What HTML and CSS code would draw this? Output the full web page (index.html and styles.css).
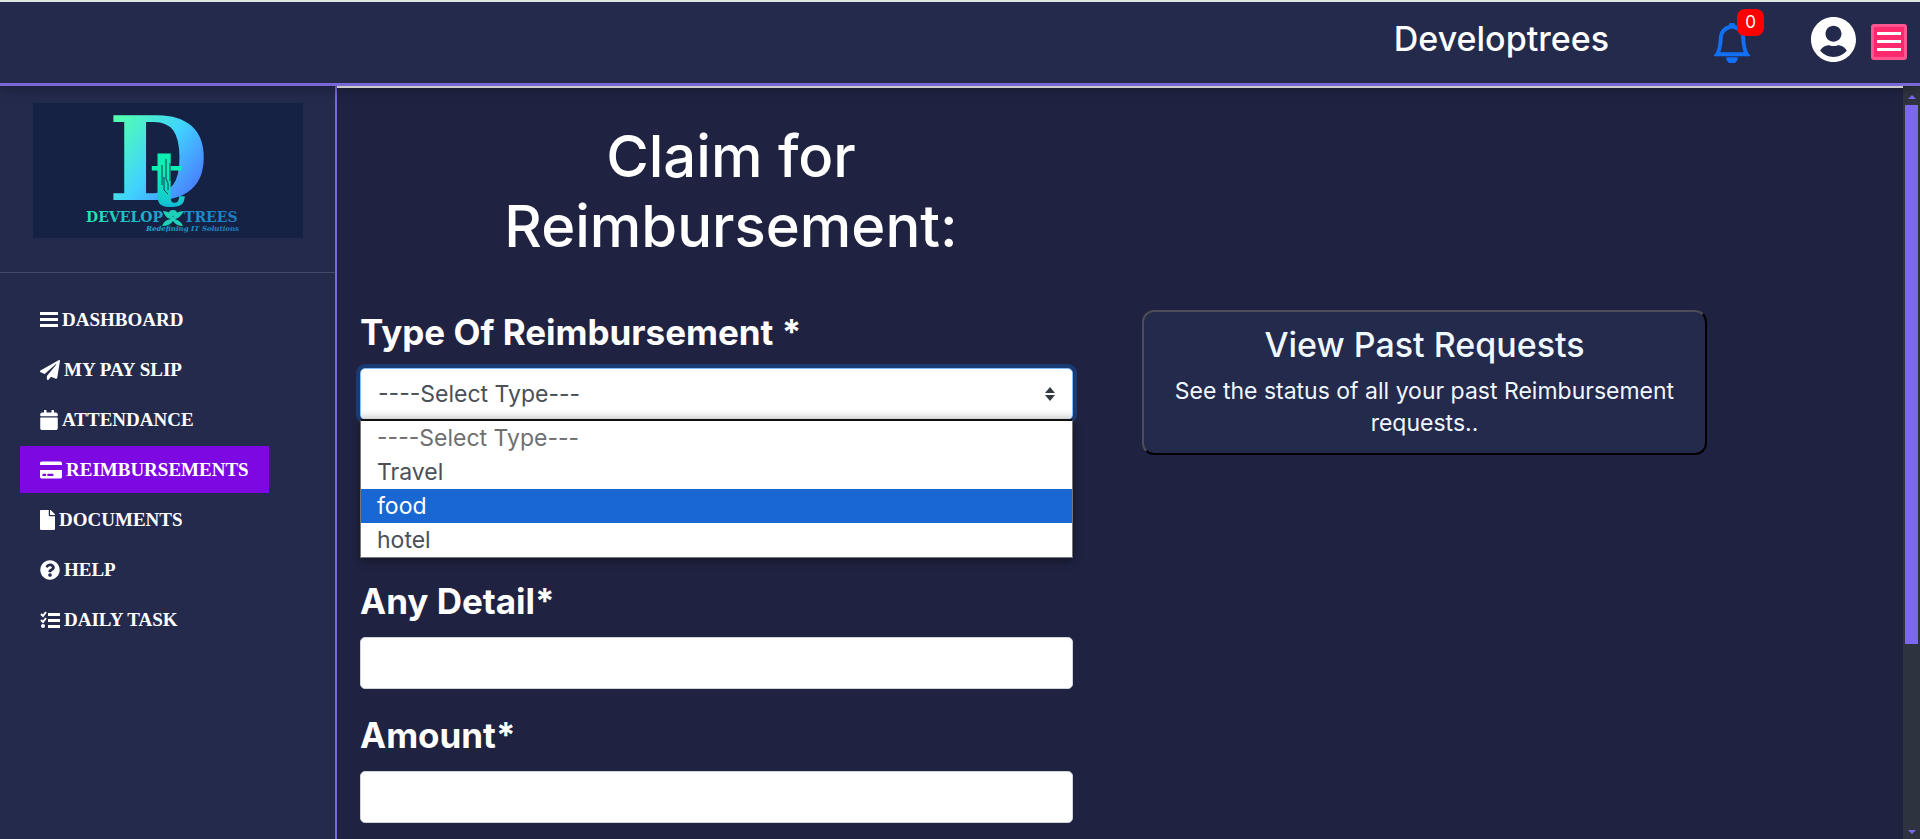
FILE: index.html
```html
<!DOCTYPE html>
<html lang="en">
<head>
<meta charset="utf-8">
<meta name="viewport" content="width=device-width, initial-scale=1">
<title>Claim for Reimbursement</title>
<link rel="stylesheet" href="styles.css">
</head>
<body>
<header class="topbar">
  <span class="brand">Developtrees</span>
  <button class="bell" type="button" aria-label="Notifications">
    <svg viewBox="0 0 16 16" width="40" height="40" fill="currentColor"><path d="M8 16a2 2 0 0 0 2-2H6a2 2 0 0 0 2 2M8 1.918l-.797.161A4 4 0 0 0 4 6c0 .628-.134 2.197-.459 3.742-.16.767-.376 1.566-.663 2.258h10.244c-.287-.692-.502-1.49-.663-2.258C12.134 8.197 12 6.628 12 6a4 4 0 0 0-3.203-3.920zM14.220 12c.223.447.481.801.78 1H1c.299-.199.557-.553.78-1C2.680 10.200 3 6.880 3 6c0-2.420 1.720-4.440 4.005-4.901a1 1 0 1 1 1.990 0A5 5 0 0 1 13 6c0 .88.32 4.200 1.220 6" stroke="currentColor" stroke-width=".6" stroke-linejoin="round"/></svg>
    <span class="badge">0</span>
  </button>
  <button class="avatar" type="button" aria-label="Account">
    <svg viewBox="0 0 496 496" width="45" height="45" fill="currentColor"><path d="M248 0C111 0 0 111 0 248s111 248 248 248 248-111 248-248S385 0 248 0zm0 96c48.600 0 88 39.400 88 88s-39.400 88-88 88-88-39.400-88-88 39.400-88 88-88zm0 344c-58.700 0-111.300-26.600-146.500-68.200 18.800-35.400 55.600-59.800 98.500-59.800 2.400 0 4.800.4 7.100 1.100 13 4.200 26.600 6.900 40.900 6.900 14.300 0 28-2.700 40.900-6.900 2.300-.7 4.700-1.100 7.100-1.100 42.900 0 79.700 24.400 98.500 59.800C359.300 413.400 306.700 440 248 440z"/></svg>
  </button>
  <button class="menu" type="button" aria-label="Menu">
    <svg viewBox="0 0 24 20" width="24" height="20" fill="#fff"><path d="M0 0h24v3H0zM0 8h24v3H0zM0 16h24v3H0z"/></svg>
  </button>
</header>
<div class="shell">
  <aside class="sidebar">
    <div class="logo">
      <svg class="logo-art" viewBox="0 0 270 135" role="img" aria-label="Develop Trees, Redefining IT Solutions">
        <defs>
          <linearGradient id="gd" x1="0" y1="0" x2="1" y2="1"><stop offset=".15" stop-color="#52ffb0"/><stop offset=".5" stop-color="#40d2ff"/><stop offset=".8" stop-color="#4a7dff"/><stop offset="1" stop-color="#4a7dff"/></linearGradient>
          <linearGradient id="gt" x1="0" y1="0" x2="0" y2="1"><stop offset=".4" stop-color="#0cf0b4"/><stop offset=".75" stop-color="#12c8d0"/><stop offset="1" stop-color="#0a80e0"/></linearGradient>
          <linearGradient id="gw" x1="47" y1="0" x2="206" y2="0" gradientUnits="userSpaceOnUse"><stop offset="0" stop-color="#22f0b0"/><stop offset=".5" stop-color="#1f9fd0"/><stop offset="1" stop-color="#1c78c0"/></linearGradient>
        </defs>
        <text class="mark-d" x="75" y="97" fill="url(#gd)">D</text>
        <text class="mark-t" x="117" y="103" fill="url(#gt)">t</text>
        <path d="M129 62v20M133 56v20l2 4v7M137 60v18M131 74v13l4 4" stroke="#123c50" fill="none"/>
        <g class="wordmark" fill="url(#gw)"><text x="130" y="119" text-anchor="end">DEVELOP</text><text x="151" y="119">TREES</text></g>
        <g fill="#1fd0b8"><ellipse cx="140" cy="110" rx="4" ry="3"/><path d="M130 108q7 0 10 6 3-6 11-6-4 7-9 8 6 2 8 7-7 0-10-5-3 5-11 5 2-6 9-7-6-1-8-8"/></g>
        <text class="tagline" x="206" y="128" text-anchor="end" fill="url(#gw)">Redefining IT Solutions</text>
      </svg>
    </div>
    <nav class="nav">
      <a href="#"><svg viewBox="0 0 18 20" width="18" height="20"><path d="M0 2h18v3H0zM0 8h18v3H0zM0 14h18v3H0z"/></svg>DASHBOARD</a>
      <a href="#"><svg viewBox="0 0 512 512" width="20" height="20"><path d="M476 3.200L12.500 270.600c-18.100 10.400-15.800 35.600 2.200 43.200L121 358.400l287.300-253.200c5.500-4.900 13.300 2.600 8.600 8.300L176 407v80.500c0 23.600 28.500 32.900 42.500 15.800L282 426l124.600 52.200c14.200 6 30.400-2.900 33-18.200l72-432C515 7.800 493.300-6.800 476 3.200z"/></svg>MY PAY SLIP</a>
      <a href="#"><svg viewBox="0 0 448 512" width="18" height="20"><path d="M12 192h424c6.600 0 12 5.400 12 12v260c0 26.500-21.500 48-48 48H48c-26.500 0-48-21.500-48-48V204c0-6.600 5.400-12 12-12zm436-44v-36c0-26.500-21.500-48-48-48h-48V12c0-6.600-5.400-12-12-12h-40c-6.600 0-12 5.400-12 12v52H160V12c0-6.600-5.400-12-12-12h-40c-6.600 0-12 5.400-12 12v52H48C21.500 64 0 85.500 0 112v36c0 6.600 5.400 12 12 12h424c6.600 0 12-5.400 12-12z"/></svg>ATTENDANCE</a>
      <a href="#" class="active" aria-current="page"><svg viewBox="0 0 576 512" width="22" height="20"><path d="M0 432c0 26.500 21.500 48 48 48h480c26.500 0 48-21.500 48-48V256H0v176zm192-68c0-6.600 5.400-12 12-12h136c6.600 0 12 5.400 12 12v40c0 6.600-5.400 12-12 12H204c-6.600 0-12-5.400-12-12v-40zm-128 0c0-6.600 5.400-12 12-12h72c6.600 0 12 5.400 12 12v40c0 6.600-5.400 12-12 12H76c-6.600 0-12-5.400-12-12v-40zM576 80v48H0V80c0-26.500 21.500-48 48-48h480c26.500 0 48 21.500 48 48z"/></svg>REIMBURSEMENTS</a>
      <a href="#"><svg viewBox="0 0 384 512" width="15" height="20"><path d="M224 136V0H24C10.700 0 0 10.700 0 24v464c0 13.300 10.700 24 24 24h336c13.300 0 24-10.700 24-24V160H248c-13.200 0-24-10.800-24-24zm160-14.100v6.100H256V0h6.100c6.400 0 12.500 2.500 17 7l97.900 98c4.500 4.500 7 10.600 7 16.900z"/></svg>DOCUMENTS</a>
      <a href="#"><svg viewBox="0 0 512 512" width="20" height="20"><path d="M504 256c0 137-111 248-248 248S8 393 8 256C8 119.100 119 8 256 8s248 111.100 248 248zM262.700 90c-54.500 0-89.300 23-116.500 63.800-3.500 5.300-2.400 12.400 2.700 16.300l34.700 26.300c5.200 3.900 12.600 3 16.700-2.100 17.900-22.700 30.100-35.800 57.300-35.800 20.400 0 45.700 13.100 45.700 33 0 15-12.400 22.700-32.500 34C247.100 238.500 216 254.900 216 296v4c0 6.600 5.400 12 12 12h56c6.600 0 12-5.400 12-12v-1.300c0-28.500 83.200-29.600 83.200-106.700 0-58-60.200-102-116.500-102zM256 338c-25.400 0-46 20.600-46 46s20.600 46 46 46 46-20.600 46-46-20.600-46-46-46z"/></svg>HELP</a>
      <a href="#"><svg viewBox="0 0 20 20" width="20" height="20"><path d="M8 3h12v3H8zM8 9h12v3H8zM8 15h12v3H8z"/><circle cx="3" cy="16" r="2"/><path d="M1 4l2 2 3-4M1 10l2 2 3-4" fill="none" stroke="#fff" stroke-width="2"/></svg>DAILY TASK</a>
    </nav>
  </aside>
  <main class="content">
    <form class="claim">
      <h1>Claim for<br>Reimbursement:</h1>
      <div class="field">
        <label for="type">Type Of Reimbursement *</label>
        <div class="select-wrap">
          <select id="type"><option>----Select Type---</option><option>Travel</option><option>food</option><option>hotel</option></select>
          <svg class="caret" viewBox="0 0 10 14" width="10" height="14" fill="#343a40"><path d="M0 6l5-6 5 6zM0 8h10l-5 6z"/></svg>
          <ul class="options">
            <li class="muted">----Select Type---</li><li>Travel</li><li class="hover">food</li><li>hotel</li>
          </ul>
        </div>
      </div>
      <div class="field detail">
        <label for="detail">Any Detail*</label>
        <input id="detail" type="text">
      </div>
      <div class="field">
        <label for="amount">Amount*</label>
        <input id="amount" type="text">
      </div>
    </form>
    <button class="past" type="button">
      <span class="past-title">View Past Requests</span>
      <span class="past-text">See the status of all your past Reimbursement requests..</span>
    </button>
  </main>
  <div class="scrollbar" aria-hidden="true">
    <svg viewBox="0 0 8 4" width="8" height="4" fill="#7b68ee"><path d="M0 4l4-4 4 4z"/></svg>
    <div class="track"><div class="thumb"></div></div>
    <svg viewBox="0 0 8 4" width="8" height="4" fill="#7b68ee"><path d="M0 0h8L4 4z"/></svg>
  </div>
</div>
</body>
</html>
```
FILE: styles.css
```css
* { box-sizing: border-box; }
body {
  margin: 0;
  height: 100vh;
  display: flex;
  flex-direction: column;
  overflow: hidden;
  background: #1f2341;
  color: #fff;
  font-family: Inter, "Open Sans", sans-serif;
}
button { font: inherit; color: inherit; padding: 0; border: 0; background: none; }
svg { display: block; flex: none; }

.topbar {
  display: flex;
  align-items: center;
  justify-content: flex-end;
  height: 86px;
  flex: none;
  padding: 0 13px 6px 0;
  border-top: 2px solid #dfe5e3;
  border-bottom: 3px solid #7869d6;
  background: #242a4c;
  box-shadow: 0 2px 12px rgba(0, 0, 0, .35);
  z-index: 1;
}
.brand { font-size: 34px; font-weight: 500; line-height: 40px; margin: 0 103px 2px 0; }
.bell { position: relative; color: #1170f4; margin-top: 6px; margin-right: 59px; }
.badge {
  position: absolute;
  top: -14px;
  right: -12px;
  width: 27px;
  height: 27px;
  border-radius: 8px;
  background: #f00;
  color: #fff;
  font-size: 17px;
  line-height: 26px;
  text-align: center;
}
.avatar { margin-right: 15px; }
.menu {
  display: grid;
  place-items: center;
  width: 36px;
  height: 36px;
  margin-top: 5px;
  border: 3px solid #ff5590;
  border-radius: 3px;
  background: #ff2a6d;
}

.shell { display: flex; flex: 1; min-height: 0; }
.sidebar { width: 337px; flex: none; background: #242a4c; border-right: 2px solid #7869d6; }
.logo { padding: 17px 32px 34px 33px; border-bottom: 1px solid #454a66; }
.logo-art { width: 100%; background: #152243; }
.mark-d { font: bold 116px "DejaVu Serif", serif; }
.mark-t { font: bold 76px "DejaVu Serif", serif; }
.wordmark { font: bold 14px "DejaVu Serif", serif; }
.tagline { font: italic bold 7px "DejaVu Serif", serif; }
.nav { display: flex; flex-direction: column; align-items: flex-start; gap: 3px; padding: 23px 20px; }
.nav a {
  display: flex;
  align-items: center;
  gap: 4px;
  height: 47px;
  padding: 0 20px;
  color: #fff;
  font: bold 19px "Liberation Serif", serif;
  text-decoration: none;
}
.nav svg { fill: #fff; }
.nav .active { background: #7d08e2; }

.content {
  flex: 1;
  display: grid;
  grid-template-columns: 713fr 565fr 127fr;
  column-gap: 69px;
  align-items: start;
  padding: 0 0 0 23px;
  border-top: 2px solid #fff;
  overflow: hidden;
}
.claim { display: flex; flex-direction: column; }
h1 {
  margin: 33px 0 0 29px;
  font-size: 58px;
  font-weight: 500;
  line-height: 70px;
  text-align: center;
}
.field { display: flex; flex-direction: column; margin-top: 25px; }
.field label { font-size: 35px; font-weight: 700; line-height: 42px; margin-bottom: 15px; }
h1 + .field { margin-top: 50px; }
.detail { margin-top: 160px; }
.select-wrap { position: relative; }
.field select,
.field input {
  width: 100%;
  height: 52px;
  padding: 0 18px;
  border: 1px solid #ced4da;
  border-radius: 5px;
  background: #fff;
  color: #495057;
  font: 400 23px Inter, sans-serif;
}
.field select {
  appearance: none;
  border-color: #80bdff;
  box-shadow: 0 0 0 4px #1a3b72;
  padding: 0 17px;
  background: linear-gradient(#fff 80%, #e6e6e6);
}
.caret { position: absolute; right: 18px; top: 19px; }
.options {
  position: absolute;
  top: 51px;
  left: 0;
  right: 0;
  margin: 0;
  padding: 0;
  border: 1px solid #767676;
  border-top: 2px solid #101010;
  background: #fff;
  color: #495057;
  font-size: 23px;
  line-height: 34px;
  list-style: none;
  box-shadow: 0 3px 8px rgba(0, 0, 0, .4);
}
.options li { padding: 0 16px; }
.options .muted { color: #6f6f6f; }
.options .hover { background: #1967d2; color: #fff; }

.past {
  display: flex;
  flex-direction: column;
  gap: 8px;
  margin-top: 222px;
  padding: 11px 28px 14px;
  border: 2px solid;
  border-color: #4d4d55 #000 #000 #4d4d55;
  border-radius: 12px;
  background: #242a4c;
  color: #f0f8ff;
  text-align: center;
}
.past-title { align-self: center; font-size: 34px; font-weight: 500; line-height: 44px; }
.past-text { font-size: 23px; line-height: 32px; }

.scrollbar {
  width: 17px;
  flex: none;
  display: flex;
  flex-direction: column;
  align-items: center;
  padding: 9px 2px 5px;
  gap: 6px;
  background: #2e343f;
}
.track { flex: 1; width: 13px; }
.thumb { height: 75%; background: #7b68ee; }
```
